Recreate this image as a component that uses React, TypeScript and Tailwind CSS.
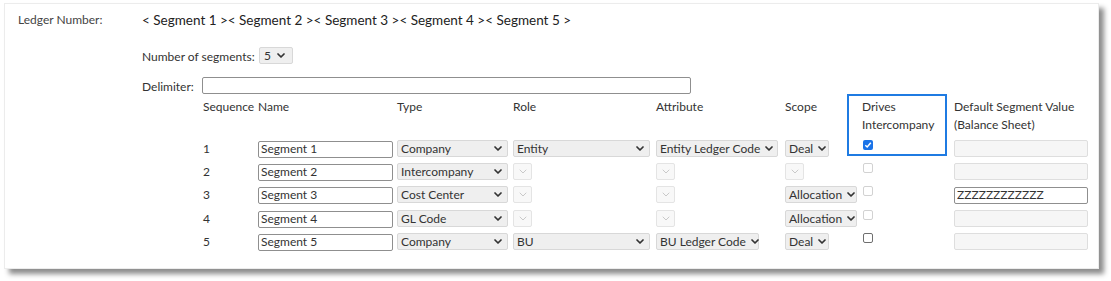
import React from "react";

type SelProps = { label?: string; w?: string; disabled?: boolean };

const Chevron = ({ light }: { light?: boolean }) => (
  <svg width="8" height="5" viewBox="0 0 8 5" className="shrink-0">
    <path
      d="M1 1 L4 4 L7 1"
      fill="none"
      stroke={light ? "#c9c9c9" : "#333"}
      strokeWidth={light ? 1 : 1.7}
      strokeLinecap="round"
      strokeLinejoin="round"
    />
  </svg>
);

const Sel = ({ label, w, disabled }: SelProps) => {
  if (disabled) {
    return (
      <div className="flex h-[17px] w-[19px] items-center justify-center rounded-[2px] border border-[#e4e4e4] bg-[#f8f8f8]">
        <Chevron light />
      </div>
    );
  }
  return (
    <div
      className={`flex h-[17px] items-center gap-[5px] rounded-[2px] border border-[#d8d8d8] bg-[#efefef] pl-[3px] pr-[5px] ${w ?? ""}`}
    >
      <span className="flex-1 whitespace-nowrap pt-[1px] leading-none">{label}</span>
      <Chevron />
    </div>
  );
};

const Check = ({ state }: { state: "on" | "off" | "disabled" }) => {
  if (state === "on") {
    return (
      <div className="flex size-[10px] items-center justify-center rounded-[2px] bg-[#1a73e8]">
        <svg width="8" height="8" viewBox="0 0 8 8">
          <path d="M1.3 4.2 L3.2 6 L6.8 1.8" fill="none" stroke="#fff" strokeWidth="1.5" />
        </svg>
      </div>
    );
  }
  return (
    <div
      className={`size-[10px] rounded-[2px] border bg-white ${
        state === "off" ? "border-[#6f6f6f]" : "border-[#d2d2d2]"
      }`}
    />
  );
};

const rows = [
  { n: 1, type: "Company", role: "Entity", attr: "Entity Ledger Code", attrW: "w-[122px]", scope: "Deal", scopeW: "w-[44px]", cb: "on" as const, def: "" },
  { n: 2, type: "Intercompany", role: "", attr: "", attrW: "", scope: "", scopeW: "", cb: "disabled" as const, def: "" },
  { n: 3, type: "Cost Center", role: "", attr: "", attrW: "", scope: "Allocation", scopeW: "w-[72px]", cb: "disabled" as const, def: "ZZZZZZZZZZZZ" },
  { n: 4, type: "GL Code", role: "", attr: "", attrW: "", scope: "Allocation", scopeW: "w-[72px]", cb: "disabled" as const, def: "" },
  { n: 5, type: "Company", role: "BU", attr: "BU Ledger Code", attrW: "w-[103px]", scope: "Deal", scopeW: "w-[44px]", cb: "off" as const, def: "" },
];

const grid = "grid grid-cols-[55px_139px_116px_143px_129px_77px_92px_140px]";

export default function App() {
  return (
    <div className="h-[281px] w-[1111px] bg-white pl-[4px] pt-[3px] font-['Lato',sans-serif] text-[12px] text-[#333]">
      <div className="relative h-[266px] w-[1095px] border border-[#ececec] bg-white shadow-[5px_5px_5px_rgba(0,0,0,0.45)]">
        <div className="flex h-[32px] items-center pl-[13px]">
          <span className="w-[124px] text-[#444]">Ledger Number:</span>
          <span className="text-[13.5px] text-[#222]">
            &lt; Segment 1 &gt;&lt; Segment 2 &gt;&lt; Segment 3 &gt;&lt; Segment 4 &gt;&lt; Segment 5 &gt;
          </span>
        </div>

        <div className="mt-[11px] flex h-[17px] items-center pl-[137px]">
          <span className="w-[117px] pt-[2px]">Number of segments:</span>
          <div className="flex h-[17px] w-[34px] items-center gap-[6px] rounded-[2px] border border-[#d8d8d8] bg-[#efefef] pl-[4px]">
            <span className="pt-[1px] leading-none">5</span>
            <Chevron />
          </div>
        </div>

        <div className="mt-[13px] flex h-[17px] items-center pl-[137px]">
          <span className="w-[60px] pt-[2px]">Delimiter:</span>
          <div className="h-[17px] w-[489px] rounded-[2px] border border-[#8f8f8f] bg-white" />
        </div>

        <div className={`${grid} mt-[4px] pl-[198px] leading-[18px]`}>
          <div>Sequence</div>
          <div>Name</div>
          <div>Type</div>
          <div>Role</div>
          <div>Attribute</div>
          <div>Scope</div>
          <div>
            Drives
            <br />
            Intercompany
          </div>
          <div>
            Default Segment Value
            <br />
            (Balance Sheet)
          </div>
        </div>

        <div className={`${grid} mt-[6px] gap-y-[6px] pl-[198px]`}>
          {rows.map((r) => (
            <React.Fragment key={r.n}>
              <div className="flex h-[17px] items-center pt-[1px]">{r.n}</div>
              <div className="h-[17px]">
                <input
                  readOnly
                  value={`Segment ${r.n}`}
                  className="h-[17px] w-[135px] rounded-[2px] border border-[#8f8f8f] bg-white px-[2px] text-[12px] text-[#333] outline-none"
                />
              </div>
              <div>
                <Sel label={r.type} w="w-[111px]" />
              </div>
              <div>{r.role ? <Sel label={r.role} w="w-[137px]" /> : <Sel disabled />}</div>
              <div>{r.attr ? <Sel label={r.attr} w={r.attrW} /> : <Sel disabled />}</div>
              <div>{r.scope ? <Sel label={r.scope} w={r.scopeW} /> : <Sel disabled />}</div>
              <div className="pl-[1px]">
                <Check state={r.cb} />
              </div>
              <div>
                {r.def ? (
                  <input
                    readOnly
                    value={r.def}
                    className="h-[17px] w-[134px] rounded-[2px] border border-[#8f8f8f] bg-white px-[2px] text-[12px] text-[#333] outline-none"
                  />
                ) : (
                  <div className="h-[17px] w-[134px] rounded-[2px] border border-[#dedede] bg-[#f6f6f6]" />
                )}
              </div>
            </React.Fragment>
          ))}
        </div>

        <div className="pointer-events-none absolute left-[842px] top-[90px] h-[62px] w-[100px] border-2 border-[#1f7be2]" />
      </div>
    </div>
  );
}
